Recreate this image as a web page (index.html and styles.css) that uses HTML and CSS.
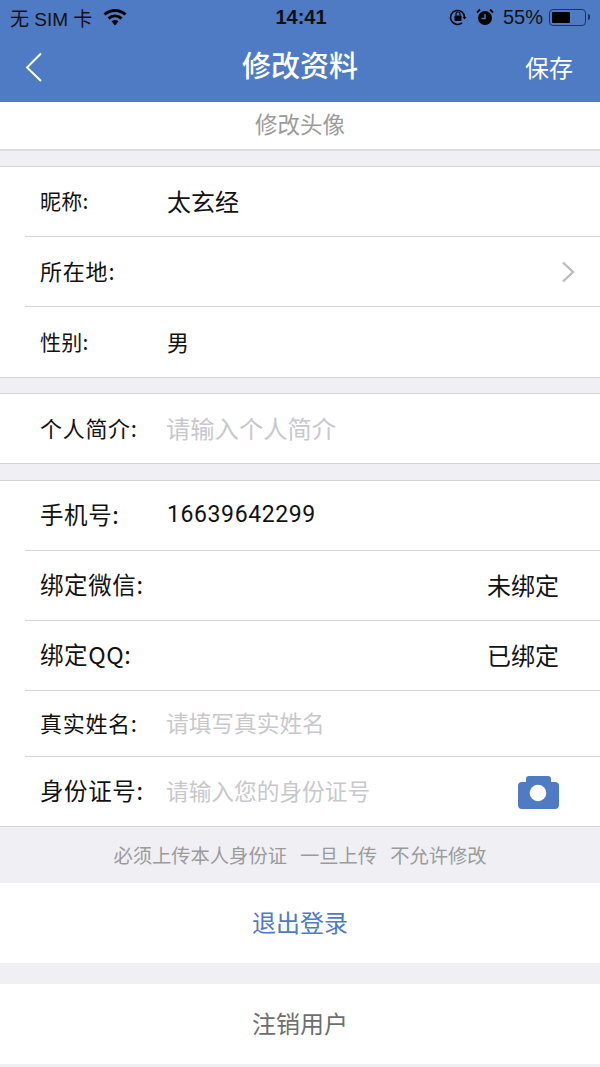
FILE: index.html
```html
<!DOCTYPE html>
<html lang="zh">
<head>
<meta charset="utf-8">
<title>修改资料</title>
<link rel="stylesheet" href="styles.css">
</head>
<body>
<header class="top">
  <div class="status">
    <div class="status-side">
      <span>无 SIM 卡</span>
      <svg class="wifi" width="24" height="18" viewBox="0 0 24 18"><path d="M1.5 6.500C7.500 1 16.500 1 22.500 6.500" fill="none" stroke="#000" stroke-width="3"/><path d="M5.500 10.500C9.500 7 14.500 7 18.500 10.500" fill="none" stroke="#000" stroke-width="3"/><path d="M8.500 13.200C10.800 11.500 13.200 11.500 15.500 13.200L12 17.500Z" fill="#000"/></svg>
    </div>
    <div class="clock">14:41</div>
    <div class="status-side status-right">
      <svg width="20" height="20" viewBox="0 0 20 20"><path d="M16.500 10A7 7 0 1 0 14 15.800" fill="none" stroke="#000" stroke-width="1.500"/><path d="M14.500 10h4l-2 2.500z" fill="#000"/><rect x="6.500" y="8.500" width="7" height="5.500" rx="1" fill="#000"/><path d="M8 8.500V7a2 2 0 0 1 4 0v1.500" fill="none" stroke="#000" stroke-width="1.200"/></svg>
      <svg class="alarm" width="18" height="18" viewBox="0 0 18 18"><circle cx="9" cy="10" r="7" fill="#000"/><path d="M9 6v4.500H5.500" fill="none" stroke="#4e7bc4" stroke-width="1.400"/><path d="M1 4.500L4 1.500M17 4.500L14 1.500" stroke="#000" stroke-width="1.800"/></svg>
      <span class="pct">55%</span>
      <span class="battery"><span class="battery-fill"></span></span>
      <span class="battery-tip"></span>
    </div>
  </div>
  <div class="nav">
    <svg class="back" width="18" height="30" viewBox="0 0 18 30"><path d="M16 1.500L2 15.500L16 29" fill="none" stroke="#fff" stroke-width="2"/></svg>
    <h1 class="title">修改资料</h1>
    <span class="save">保存</span>
  </div>
</header>

<section class="avatar">修改头像</section>

<section class="group">
  <div class="row"><span class="label">昵称:</span><span class="value big">太玄经</span></div>
  <div class="row"><span class="label label-m">所在地:</span><svg class="chev" width="14" height="22" viewBox="0 0 14 22"><path d="M2 1.500L12 11L2 20.500" fill="none" stroke="#bcbcc0" stroke-width="2.400"/></svg></div>
  <div class="row row-full"><span class="label">性别:</span><span class="value">男</span></div>
</section>

<section class="group">
  <div class="row"><span class="label label-l">个人简介:</span><span class="value hint">请输入个人简介</span></div>
</section>

<section class="group group-last">
  <div class="row"><span class="label label-xl">手机号:</span><span class="value num">16639642299</span></div>
  <div class="row"><span class="label label-xl">绑定微信:</span><span class="end">未绑定</span></div>
  <div class="row"><span class="label label-xl">绑定QQ:</span><span class="end">已绑定</span></div>
  <div class="row row-short"><span class="label label-l">真实姓名:</span><span class="value hint hint-s">请填写真实姓名</span></div>
  <div class="row"><span class="label label-xl">身份证号:</span><span class="value hint hint-s">请输入您的身份证号</span>
    <svg class="cam" width="41" height="33" viewBox="0 0 41 33"><path d="M8 6V3a3 3 0 0 1 3-3h19a3 3 0 0 1 3 3v3h4a4 4 0 0 1 4 4v19a4 4 0 0 1-4 4H4a4 4 0 0 1-4-4V10a4 4 0 0 1 4-4z" fill="#4e7bc4"/><circle cx="20" cy="17" r="8.300" fill="#fff"/></svg>
  </div>
</section>

<p class="note">必须上传本人身份证&nbsp;&nbsp;一旦上传&nbsp;&nbsp;不允许修改</p>

<div class="action action-blue">退出登录</div>
<div class="action action-gray">注销用户</div>
</body>
</html>
```
FILE: styles.css
```css
* { box-sizing: border-box; }
html, body { margin: 0; padding: 0; }
body {
  width: 600px;
  height: 1067px;
  overflow: hidden;
  background: #efeff4;
  font-family: "Noto Sans CJK SC", "Liberation Sans", sans-serif;
  color: #111;
}
.top { height: 102px; background: #4e7bc4; display: flex; flex-direction: column; }
.status {
  height: 34px;
  padding: 0 10px;
  display: flex;
  align-items: center;
  justify-content: space-between;
  position: relative;
  font-family: "Liberation Sans", "Noto Sans CJK SC", sans-serif;
  font-size: 19px;
  color: #111;
}
.status-side { display: flex; align-items: center; gap: 11px; }
.status-right { gap: 0; }
.clock {
  position: absolute;
  left: 2px;
  right: 0;
  text-align: center;
  font-weight: 700;
  font-size: 20px;
}
.alarm { margin-left: 8px; }
.pct { margin-left: 9px; font-size: 20px; }
.battery {
  margin-left: 6px;
  width: 37px;
  height: 17px;
  border: 1px solid #1c3560;
  border-radius: 4px;
  padding: 2px;
  display: flex;
}
.battery-fill { width: 18px; background: #000; border-radius: 1px; }
.battery-tip { width: 2px; height: 6px; margin-left: 2px; background: #1c3560; border-radius: 0 2px 2px 0; }
.nav { flex: 1; position: relative; display: flex; align-items: center; justify-content: center; padding-bottom: 7px; }
.title { margin: 0; color: #fff; font-size: 29px; font-weight: 500; line-height: 1; }
.back { position: absolute; left: 25px; top: 18px; }
.save { position: absolute; right: 27px; top: 16px; color: #fff; font-size: 24px; line-height: 34px; }

.avatar {
  height: 49px;
  background: #fff;
  border-bottom: 2px solid #dcdce0;
  text-align: center;
  font-size: 22.500px;
  line-height: 42px;
  color: #9b9b9b;
}
.group {
  margin-top: 15px;
  background: #fff;
  border-top: 1px solid #d4d4d8;
  border-bottom: 1px solid #d4d4d8;
  padding-left: 25px;
}
.group-last { margin-top: 16px; }
.row {
  height: 70px;
  display: flex;
  align-items: center;
  padding-left: 15px;
  padding-right: 41px;
  padding-bottom: 3px;
  border-bottom: 1px solid #d4d4d8;
  position: relative;
}
.row:last-child { border-bottom: 0; height: 69px; }
.row.row-full { height: 70px; }
.row-short { height: 66px; }
.label { width: 127px; flex: none; font-size: 21px; letter-spacing: 0.300px; }
.label-m { font-size: 22px; letter-spacing: 0.800px; }
.label-l { font-size: 22px; letter-spacing: 0.700px; }
.label-xl { font-size: 23.500px; letter-spacing: 0.600px; }
.value { font-size: 22px; }
.big { font-size: 24px; }
.num { font-family: "Roboto", "Liberation Sans", sans-serif; font-size: 23px; letter-spacing: 0.600px; }
.hint { font-size: 24.300px; color: #c8c8cc; margin-left: -1px; }
.hint-s { font-size: 22.700px; }
.end { margin-left: auto; font-size: 24px; }
.chev { position: absolute; right: 25px; top: 24px; }
.cam { position: absolute; right: 41px; top: 19px; }
.note {
  margin: 0;
  height: 56px;
  text-align: center;
  font-size: 19.300px;
  word-spacing: 2.200px;
  line-height: 56px;
  color: #9b9b9b;
}
.action {
  height: 80px;
  background: #fff;
  text-align: center;
  font-size: 24px;
  line-height: 78px;
}
.action-blue { color: #4e7bc4; }
.action-gray { margin-top: 21px; color: #6e6e6e; }
```
